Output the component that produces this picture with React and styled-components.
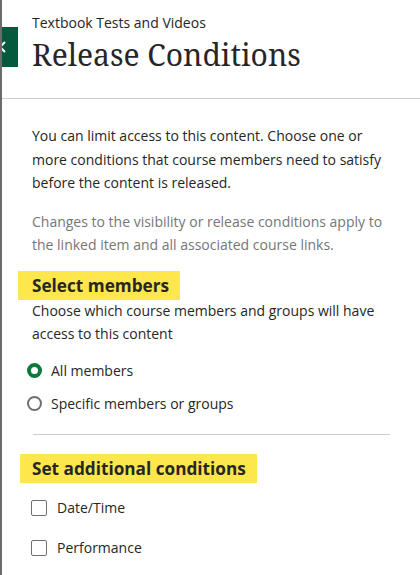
import React from "react";
import styled, { createGlobalStyle } from "styled-components";

const Global = createGlobalStyle`
  html, body { margin: 0; padding: 0; background: #fff; }
  body { font-family: "Open Sans", "Noto Sans", sans-serif; color: #262626; }
  * { box-sizing: border-box; }
`;

const Panel = styled.div`
  position: relative;
  width: 420px;
  min-height: 575px;
  border-left: 2px solid #6b6b6b;
  overflow: hidden;
`;

const CloseTab = styled.button`
  position: absolute;
  left: -2px;
  top: 27px;
  width: 18px;
  height: 40px;
  border: none;
  padding: 0;
  background: #035a3c;
  display: flex;
  align-items: center;
  justify-content: flex-start;
  overflow: visible;
  &::after {
    content: "";
    position: absolute;
    left: 0;
    top: 40px;
    width: 2px;
    height: 15px;
    background: #035a3c;
  }
`;

const Header = styled.header`
  padding: 13px 30px 0 30px;
  height: 99px;
  border-bottom: 1px solid #cdcdcd;
`;

const Breadcrumb = styled.div`
  font-size: 14px;
  line-height: 20px;
  color: #262626;
`;

const Title = styled.h1`
  margin: 1px 0 0 0;
  font-family: "Noto Serif", "DejaVu Serif", "Liberation Serif", serif;
  font-weight: 400;
  font-size: 30px;
  line-height: 42px;
  color: #262626;
`;

const Body = styled.main`
  padding: 25px 30px 0 30px;
`;

const Para = styled.p`
  margin: 0 0 15px 0;
  font-size: 14px;
  line-height: 23.5px;
  color: ${(p) => (p.muted ? "#767676" : "#262626")};
`;

const HeadingPara = styled(Para)`
  margin-top: -1px;
`;

const SectionHeading = styled.h2`
  display: inline-block;
  margin: 0 0 0 ${(p) => p.offset - 30}px;
  padding: 2px 11px 2px ${(p) => 30 - p.offset}px;
  background: #fde74c;
  font-size: 17.2px;
  font-weight: 700;
  line-height: 25px;
  color: #262626;
`;

const Section = styled.section`
  margin-top: ${(p) => p.top}px;
`;

const Options = styled.div`
  display: flex;
  flex-direction: column;
  gap: ${(p) => p.gap}px;
  margin-top: ${(p) => p.top}px;
`;

const OptionRow = styled.label`
  display: flex;
  align-items: center;
  gap: ${(p) => p.spacing}px;
  font-size: 14px;
  line-height: 20px;
  color: #262626;
  margin-left: ${(p) => p.indent}px;
`;

const Radio = styled.span`
  width: 15px;
  height: 15px;
  border-radius: 50%;
  border: ${(p) => (p.checked ? "4.5px solid #0b7a3b" : "2px solid #6f6f6f")};
  background: #fff;
  flex: none;
`;

const Checkbox = styled.span`
  width: 16px;
  height: 16px;
  border: 1.5px solid #6f6f6f;
  border-radius: 2px;
  background: #fff;
  flex: none;
`;

const Divider = styled.hr`
  border: none;
  border-top: 1px solid #cdcdcd;
  margin: 20px 0 0 1px;
`;

export default function App() {
  return (
    <>
      <Global />
      <Panel>
        <CloseTab aria-label="Close">
          <svg width="6" height="12" viewBox="0 0 6 12">
            <path d="M-5 1 L5 11 M5 1 L-5 11" stroke="#fff" strokeWidth="2" fill="none" />
          </svg>
        </CloseTab>
        <Header>
          <Breadcrumb>Textbook Tests and Videos</Breadcrumb>
          <Title>Release Conditions</Title>
        </Header>
        <Body>
          <Para>
            You can limit access to this content. Choose one or more conditions that course
            members need to satisfy before the content is released.
          </Para>
          <Para muted>
            Changes to the visibility or release conditions apply to the linked item and all
            associated course links.
          </Para>
          <Section top={-1}>
            <SectionHeading offset={16}>Select members</SectionHeading>
            <HeadingPara>Choose which course members and groups will have access to this content</HeadingPara>
            <Options gap={13} top={13}>
              <OptionRow indent={-5} spacing={9}>
                <Radio checked />
                All members
              </OptionRow>
              <OptionRow indent={-5} spacing={9}>
                <Radio />
                Specific members or groups
              </OptionRow>
            </Options>
            <Divider />
          </Section>
          <Section top={19}>
            <SectionHeading offset={18}>Set additional conditions</SectionHeading>
            <Options gap={20} top={15}>
              <OptionRow indent={-1} spacing={10}>
                <Checkbox />
                Date/Time
              </OptionRow>
              <OptionRow indent={-1} spacing={10}>
                <Checkbox />
                Performance
              </OptionRow>
            </Options>
          </Section>
        </Body>
      </Panel>
    </>
  );
}
